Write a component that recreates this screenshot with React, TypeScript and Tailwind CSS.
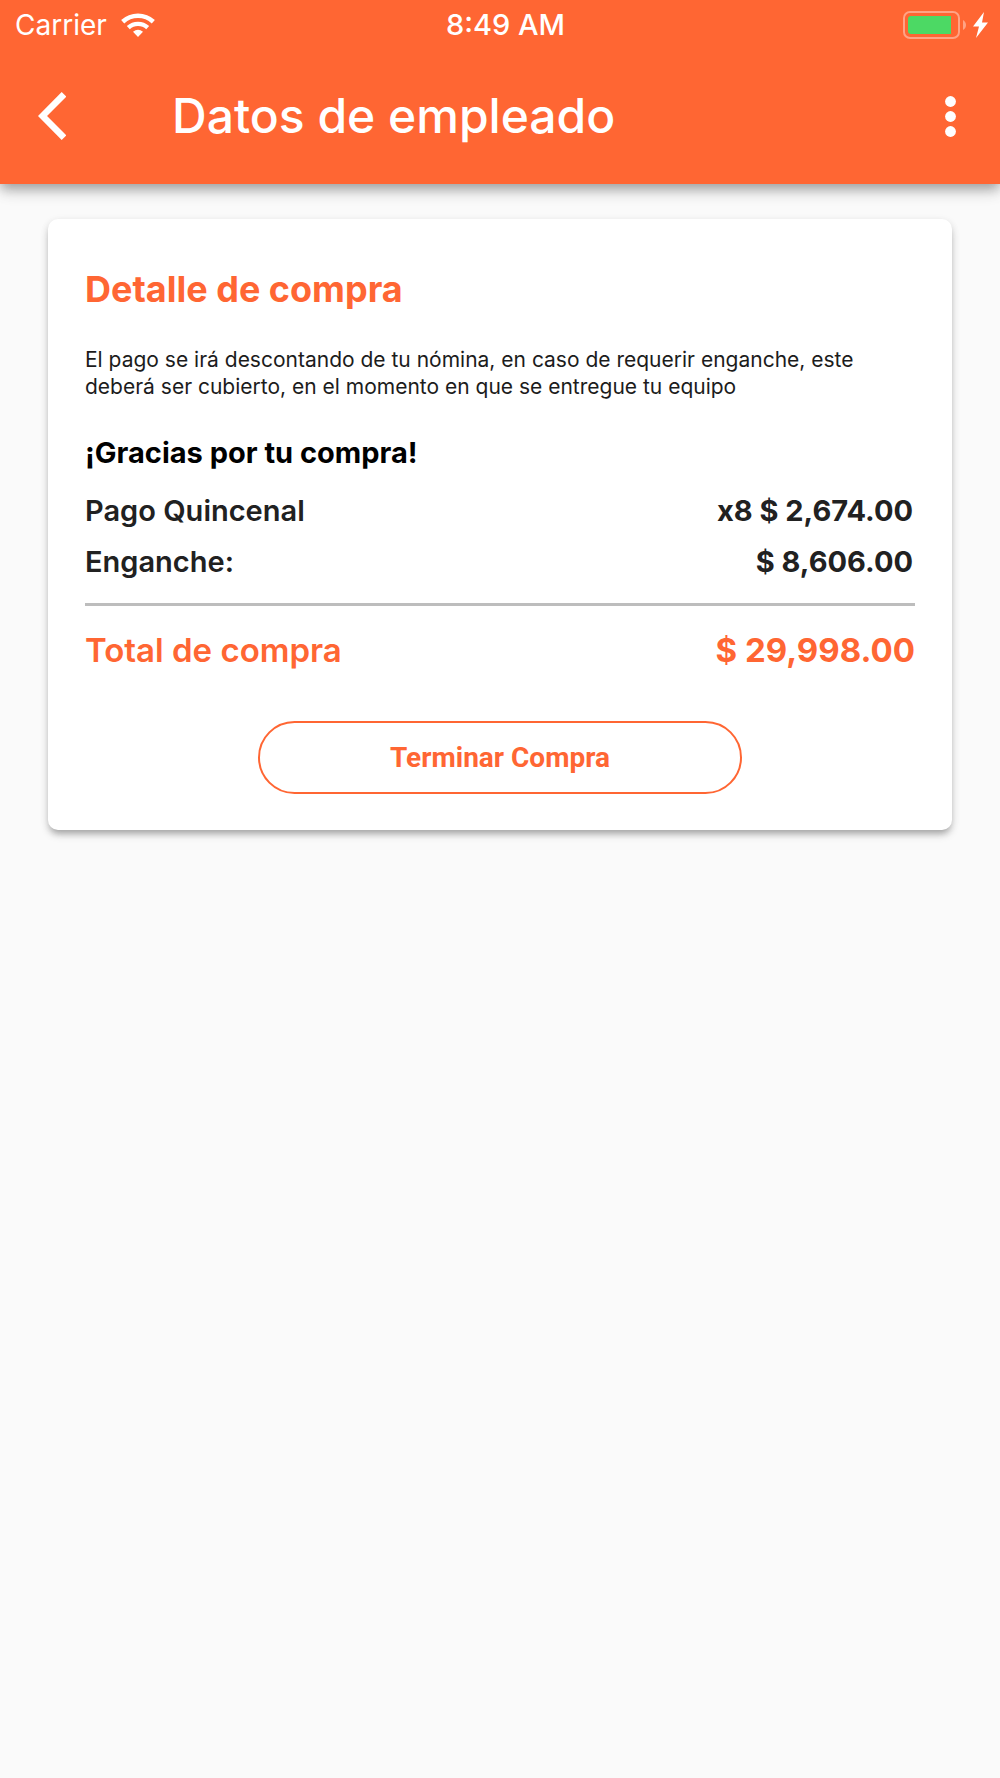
import React from 'react';

function WifiIcon() {
  return (
    <svg className="h-6 w-[34px]" viewBox="0 0 34 24" fill="none" aria-hidden="true">
      <path d="M1.700 8.800a22.500 22.500 0 0 1 30.600 0" stroke="currentColor" strokeWidth="4.600" />
      <path d="M7.300 14.600a14.500 14.500 0 0 1 19.400 0" stroke="currentColor" strokeWidth="4.400" />
      <path d="M17 24l5-5.200a8 8 0 0 0-10 0Z" fill="currentColor" />
    </svg>
  );
}

function BatteryIcon() {
  return (
    <svg className="h-7 w-[63px]" viewBox="0 0 63 28" fill="none" aria-hidden="true">
      <rect x="1" y="1" width="55" height="26" rx="6" stroke="#ffa385" strokeWidth="2" />
      <path d="M8 5h40v18H8a3 3 0 0 1-3-3V8a3 3 0 0 1 3-3Z" fill="#4cd964" />
      <path d="M60 9c4 2 4 8 0 10Z" fill="#ffa385" />
    </svg>
  );
}

function BoltIcon() {
  return (
    <svg className="h-[26px] w-[15px]" viewBox="0 0 15 26" fill="currentColor" aria-hidden="true">
      <path d="M11 0 0 14.500h6L3 26l12-15.500H9Z" />
    </svg>
  );
}

function StatusBar() {
  return (
    <div className="grid h-[50px] grid-cols-3 items-center pl-[15px] pr-3 leading-8">
      <div className="flex items-center gap-[14px] text-[28px]">
        <span>Carrier</span>
        <WifiIcon />
      </div>
      <span className="pl-2 text-center text-[29px] font-medium">8:49 AM</span>
      <div className="flex items-center justify-end gap-[7px]">
        <BatteryIcon />
        <BoltIcon />
      </div>
    </div>
  );
}

function Toolbar() {
  return (
    <div className="flex h-[132px] items-center pl-[38px] pr-11">
      <button type="button" aria-label="Atrás">
        <svg className="h-12 w-7" viewBox="0 0 28 48" fill="none" stroke="currentColor" strokeWidth="6.500" aria-hidden="true">
          <path d="M26 2.300 4.500 24 26 45.700" />
        </svg>
      </button>
      <h1 className="ml-[106px] flex-1 text-[48px] font-medium leading-[56px]">Datos de empleado</h1>
      <button type="button" aria-label="Más opciones">
        <svg className="h-[41px] w-[11px]" viewBox="0 0 11 41" fill="currentColor" aria-hidden="true">
          <circle cx="5.500" cy="5.500" r="5.400" />
          <circle cx="5.500" cy="20.500" r="5.400" />
          <circle cx="5.500" cy="35.500" r="5.400" />
        </svg>
      </button>
    </div>
  );
}

const rows = [
  { label: 'Pago Quincenal', value: 'x8 $ 2,674.00' },
  { label: 'Enganche:', value: '$ 8,606.00' },
];

export default function App() {
  return (
    <div className="min-h-screen bg-[#fafafa] font-['Inter',sans-serif]">
      <header className="bg-[#ff6633] pb-0.5 text-white shadow-[0_5px_10px_-2px_rgba(0,0,0,0.2),0_8px_12px_0_rgba(0,0,0,0.14),0_3px_20px_0_rgba(0,0,0,0.12)]">
        <StatusBar />
        <Toolbar />
      </header>
      <main className="px-12 pt-[35px]">
        <section className="rounded-[10px] bg-white px-[37px] pb-9 pt-12 shadow-[0_6px_6px_-3px_rgba(0,0,0,0.2),0_5px_8px_0_rgba(0,0,0,0.14),0_2px_8px_0_rgba(0,0,0,0.08)]">
          <h2 className="text-[36px] font-bold leading-[44px] text-[#ff6633]">Detalle de compra</h2>
          <p className="mt-[35px] text-[21px] leading-[27px] text-[#1c1c1c]">
            El pago se irá descontando de tu nómina, en caso de requerir enganche, este deberá ser cubierto, en el
            momento en que se entregue tu equipo
          </p>
          <p className="mt-[35px] text-[29px] font-bold leading-9 text-black">¡Gracias por tu compra!</p>
          <dl className="mt-[14px] text-[29px] leading-[51px] text-[#212121]">
            {rows.map((row) => (
              <div key={row.label} className="flex justify-between">
                <dt className="font-semibold">{row.label}</dt>
                <dd className="pr-0.5 font-bold">{row.value}</dd>
              </div>
            ))}
            <div className="mt-4 flex justify-between border-t-[3px] border-[#bdbdbd] pt-[22px] text-[33px] leading-[44px] text-[#ff6633]">
              <dt className="font-semibold">Total de compra</dt>
              <dd className="font-bold">$ 29,998.00</dd>
            </div>
          </dl>
          <button
            type="button"
            className="mx-auto mt-[49px] block h-[73px] w-7/12 rounded-full border-2 border-[#ff6633] font-['Roboto',sans-serif] text-[28px] font-bold text-[#ff6633]"
          >
            Terminar Compra
          </button>
        </section>
      </main>
    </div>
  );
}
